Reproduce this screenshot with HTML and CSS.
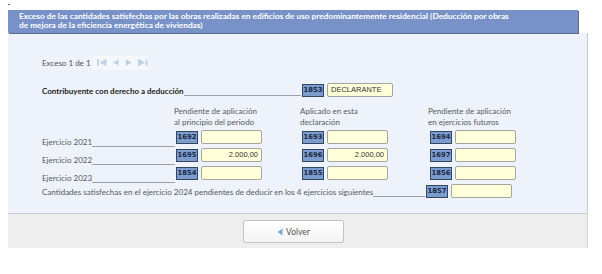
FILE: index.html
```html
<!DOCTYPE html>
<html lang="es">
<head>
<meta charset="utf-8">
<link rel="stylesheet" href="styles.css">
</head>
<body>
<div class="mark"></div>
<div class="panel">
  <div class="title">Exceso de las cantidades satisfechas por las obras realizadas en edificios de uso predominantemente residencial (Deducción por obras<br>de mejora de la eficiencia energética de viviendas)</div>
  <div class="content">
    <div class="pager">
      <span class="pager-txt">Exceso 1 de 1</span>
      <div class="nav">
        <svg width="11" height="9" viewBox="0 0 11 9"><rect x="0" y="1" width="2" height="7" fill="#c0d0e6"/><path d="M10 0.5v8L2.5 4.5z" fill="#c0d0e6"/></svg>
        <svg width="8" height="9" viewBox="0 0 8 9"><path d="M7 1v7L1 4.5z" fill="#c0d0e6"/></svg>
        <svg width="8" height="9" viewBox="0 0 8 9"><path d="M1 1v7L7 4.5z" fill="#c0d0e6"/></svg>
        <svg width="11" height="9" viewBox="0 0 11 9"><path d="M1 0.5v8L8.5 4.5z" fill="#c0d0e6"/><rect x="9" y="1" width="2" height="7" fill="#c0d0e6"/></svg>
      </div>
    </div>
    <div class="grid">
      <div class="lbl strong span2"><span>Contribuyente con derecho a deducción</span><i class="fill"></i></div>
      <div class="cell"><b class="code">1853</b><span class="inp inp-wide left">DECLARANTE</span></div>
      <div></div>

      <div></div>
      <div class="head">Pendiente de aplicación<br>al principio del periodo</div>
      <div class="head">Aplicado en esta<br>declaración</div>
      <div class="head">Pendiente de aplicación<br>en ejercicios futuros</div>

      <div class="lbl"><span>Ejercicio 2021</span><i class="fill"></i></div>
      <div class="cell"><b class="code">1692</b><span class="inp"></span></div>
      <div class="cell"><b class="code">1693</b><span class="inp"></span></div>
      <div class="cell"><b class="code">1694</b><span class="inp"></span></div>

      <div class="lbl"><span>Ejercicio 2022</span><i class="fill"></i></div>
      <div class="cell"><b class="code">1695</b><span class="inp">2.000,00</span></div>
      <div class="cell"><b class="code">1696</b><span class="inp">2.000,00</span></div>
      <div class="cell"><b class="code">1697</b><span class="inp"></span></div>

      <div class="lbl"><span>Ejercicio 2023</span><i class="fill"></i></div>
      <div class="cell"><b class="code">1854</b><span class="inp"></span></div>
      <div class="cell"><b class="code">1855</b><span class="inp"></span></div>
      <div class="cell"><b class="code">1856</b><span class="inp"></span></div>
    </div>
    <div class="last">
      <div class="lbl last-lbl"><span>Cantidades satisfechas en el ejercicio 2024 pendientes de deducir en los 4 ejercicios siguientes</span><i class="fill"></i></div>
      <div class="cell"><b class="code">1857</b><span class="inp"></span></div>
    </div>
  </div>
  <div class="footer">
    <button class="back"><svg width="6" height="8" viewBox="0 0 6 8"><path d="M5.5 0.5v7L0.5 4z" fill="#7ea6d8"/></svg><span>Volver</span></button>
  </div>
</div>
</body>
</html>
```

FILE: styles.css
```css
* { box-sizing: border-box; }
html, body { margin: 0; padding: 0; background: #ffffff; }
body {
  width: 602px;
  height: 274px;
  font-family: Lato, "Open Sans", sans-serif;
  font-size: 8px;
  color: #555a60;
}
.mark {
  width: 2px;
  height: 1px;
  background: #666;
  margin: 4px 0 0 8px;
}
.panel {
  margin: 5px 0 0 8px;
  width: 580px;
}
.title {
  width: 570px;
  height: 23px;
  background: #7892c8;
  color: #ffffff;
  font-weight: bold;
  font-size: 8.3px;
  line-height: 9px;
  padding: 2px 4px 0 11px;
  box-shadow: 1px 1px 0 #5d6c8c;
  position: relative;
  z-index: 1;
}
.content {
  height: 180px;
  background: #eef2fa;
  border-right: 1px solid #c4c8d0;
  padding: 22px 0 0 34px;
}
.pager {
  display: flex;
  align-items: center;
  height: 15px;
}
.pager-txt { color: #4f5459; }
.nav {
  display: flex;
  align-items: center;
  gap: 5px;
  margin-left: 2px;
  height: 15px;
  width: 55px;
  padding-left: 4px;
  background: #f5f7fb;
}
.grid {
  margin-top: 13px;
  display: grid;
  grid-template-columns: 134px 126px 128px 1fr;
  grid-template-rows: 14px 33px 18px 18px 18px;
}
.span2 { grid-column: span 2; padding-right: 3px; }
.lbl {
  display: flex;
  align-items: flex-end;
  padding-bottom: 1px;
  white-space: nowrap;
}
.lbl span { line-height: 9px; }
.lbl .fill {
  flex: 1;
  border-bottom: 1px solid #9aa0a8;
  height: 1px;
}
.strong { font-weight: bold; color: #222; }
.grid .lbl { padding-right: 1px; align-self: end; height: 14px; }
.head {
  align-self: end;
  line-height: 11px;
  padding-bottom: 2px;
  margin-left: -2px;
  color: #555a60;
}
.cell {
  display: flex;
  align-items: center;
  gap: 3px;
  height: 14px;
  align-self: start;
}
.code {
  display: inline-block;
  width: 22px;
  height: 13px;
  background: #7a9ccf;
  border: 1px solid #34465e;
  color: #1a2842;
  font-family: "DejaVu Sans", sans-serif;
  font-weight: bold;
  font-size: 6.8px;
  line-height: 11px;
  text-align: center;
}
.inp {
  display: inline-block;
  width: 61px;
  height: 14px;
  background: #ffffd9;
  border: 1px solid #a4a4a0;
  border-radius: 2px;
  font-family: "Liberation Sans", Arial, sans-serif;
  font-size: 7.5px;
  line-height: 12px;
  color: #333;
  text-align: right;
  padding: 0 3px;
}
.inp-wide { width: 66px; }
.left { text-align: left; }
.last {
  display: flex;
  align-items: flex-end;
  height: 14px;
}
.last-lbl { width: 384px; padding-right: 1px; }
.footer {
  height: 35px;
  background: #eeeeee;
  border-top: 1px solid #c8c8c8;
  border-right: 1px solid #d8d8d8;
  padding-top: 6px;
  display: flex;
  justify-content: center;
  padding-right: 8px;
}
.back {
  width: 101px;
  height: 23px;
  margin: 0;
  background: linear-gradient(#ffffff, #f3f3f3);
  border: 1px solid #c2c2c2;
  border-radius: 2px;
  display: flex;
  align-items: center;
  justify-content: center;
  gap: 3px;
  font-family: Lato, "Open Sans", sans-serif;
  font-size: 8.5px;
  color: #555;
  padding: 0;
}
```
